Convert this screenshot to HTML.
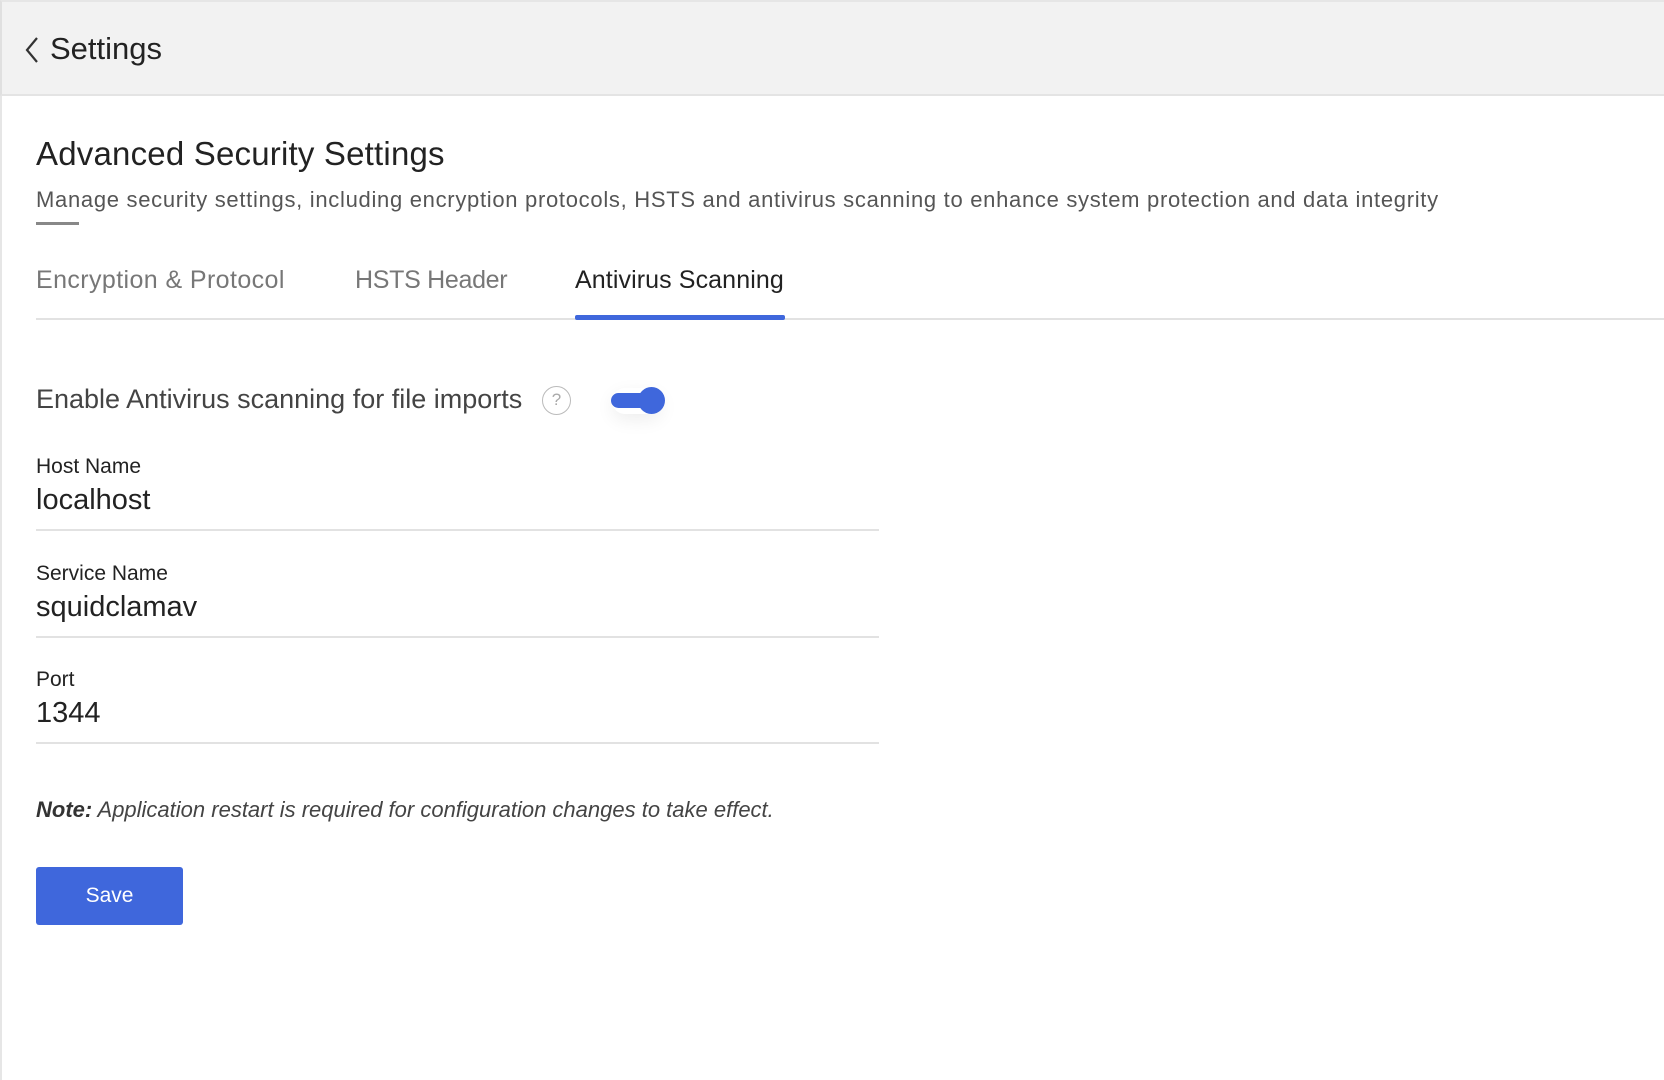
<!DOCTYPE html>
<html><head><meta charset="utf-8"><style>
*{margin:0;padding:0;box-sizing:border-box}
body{width:1664px;height:1080px;background:#fff;font-family:"Liberation Sans",sans-serif;color:#222;position:relative;overflow:hidden}
.hdr{position:absolute;left:0;top:0;width:1664px;height:96px;background:#f2f2f2;border-bottom:2px solid #e4e4e4;border-left:2px solid #e0e0e0;border-top:2px solid #e6e6e6}
.abs{position:absolute;white-space:nowrap;line-height:1}
.lbl{font-size:21px;color:#222}
.val{font-size:29px;color:#222}
.line{position:absolute;left:36px;width:843px;height:2px;background:#e2e2e2}
</style></head><body>
<div class="hdr"></div>
<div style="position:absolute;left:0;top:96px;width:2px;height:984px;background:#e6e6e6"></div>
<svg class="abs" style="left:24px;top:36px" width="16" height="28" viewBox="0 0 16 28"><path d="M13 2 L3 14 L13 26" fill="none" stroke="#333" stroke-width="2.2"/></svg>
<div class="abs" style="left:50px;top:33px;font-size:31px;color:#222">Settings</div>
<div class="abs" style="left:36px;top:137px;font-size:33px;color:#222;letter-spacing:0.2px">Advanced Security Settings</div>
<div class="abs" style="left:36px;top:189px;font-size:22px;color:#555;letter-spacing:0.7px">Manage security settings, including encryption protocols, HSTS and antivirus scanning to enhance system protection and data integrity</div>
<div style="position:absolute;left:36px;top:222px;width:43px;height:3px;background:#888"></div>
<div class="abs" style="left:36px;top:268px;font-size:25px;color:#777;letter-spacing:0.4px">Encryption &amp; Protocol</div>
<div class="abs" style="left:355px;top:268px;font-size:25px;color:#777;letter-spacing:-0.3px">HSTS Header</div>
<div class="abs" style="left:575px;top:268px;font-size:25px;color:#222;letter-spacing:0.1px">Antivirus Scanning</div>
<div style="position:absolute;left:36px;top:318px;width:1628px;height:2px;background:#e2e2e2"></div>
<div style="position:absolute;left:575px;top:315px;width:210px;height:5px;background:#3f67dc;border-radius:2px"></div>
<div class="abs" style="left:36px;top:386px;font-size:27px;color:#444">Enable Antivirus scanning for file imports</div>
<div class="abs" style="left:542px;top:386px;width:29px;height:29px;border:1.5px solid #bbb;border-radius:50%;font-size:17px;color:#aaa;text-align:center;line-height:26px">?</div>
<div style="position:absolute;left:612px;top:388px;width:50px;height:26px;border-radius:13px;box-shadow:0 6px 18px rgba(0,0,0,0.07)"></div>
<div style="position:absolute;left:611px;top:393px;width:50px;height:15px;border-radius:8px;background:#3f67dc"></div>
<div style="position:absolute;left:638px;top:387px;width:27px;height:27px;border-radius:50%;background:#3f67dc"></div>
<div class="abs lbl" style="left:36px;top:456px">Host Name</div>
<div class="abs val" style="left:36px;top:486px">localhost</div>
<div class="line" style="top:529px"></div>
<div class="abs lbl" style="left:36px;top:563px">Service Name</div>
<div class="abs val" style="left:36px;top:593px">squidclamav</div>
<div class="line" style="top:636px"></div>
<div class="abs lbl" style="left:36px;top:669px">Port</div>
<div class="abs val" style="left:36px;top:699px">1344</div>
<div class="line" style="top:742px"></div>
<div class="abs" style="left:36px;top:799px;font-size:22px;color:#444;font-style:italic;letter-spacing:0px"><b style="color:#333">Note:</b> Application restart is required for configuration changes to take effect.</div>
<div style="position:absolute;left:36px;top:867px;width:147px;height:58px;background:#3f67dc;border-radius:3px;color:#fff;font-size:21px;text-align:center;line-height:58px">Save</div>
</body></html>
